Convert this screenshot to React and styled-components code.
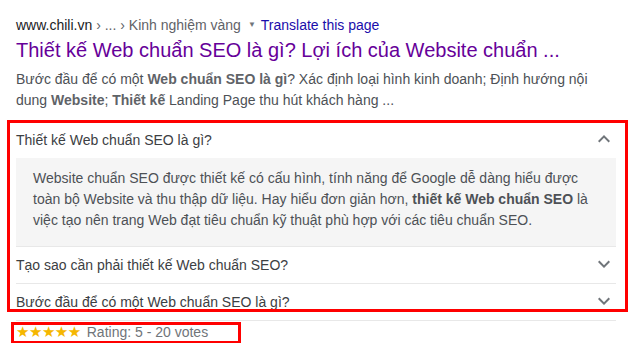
import styled, { createGlobalStyle } from "styled-components";

const GlobalStyle = createGlobalStyle`
  body {
    margin: 0;
    background: #fff;
    font-family: "Liberation Sans", Arial, sans-serif;
  }
`;

const faqs = [
  {
    q: "Thiết kế Web chuẩn SEO là gì?",
    open: true,
  },
  { q: "Tạo sao cần phải thiết kế Web chuẩn SEO?" },
  { q: "Bước đầu để có một Web chuẩn SEO là gì?" },
];

function Chevron({ up }) {
  return (
    <Icon viewBox="0 0 24 24" aria-hidden="true">
      {up ? (
        <path d="M12 8l-6 6 1.41 1.41L12 10.83l4.59 4.58L18 14z" />
      ) : (
        <path d="M16.59 8.59L12 13.17 7.41 8.59 6 10l6 6 6-6z" />
      )}
    </Icon>
  );
}

function App() {
  return (
    <Page>
      <GlobalStyle />
      <Result>
        <Cite>
          <Domain>www.chili.vn</Domain>
          <Crumbs> › ... › Kinh nghiệm vàng</Crumbs>
          <DropArrow>▼</DropArrow>
          <Translate>Translate this page</Translate>
        </Cite>
        <Title>Thiết kế Web chuẩn SEO là gì? Lợi ích của Website chuẩn ...</Title>
        <Snippet>
          Bước đầu để có một <b>Web chuẩn SEO là gì</b>? Xác định loại hình
          kinh doanh; Định hướng nội dung <b>Website</b>; <b>Thiết kế</b>{" "}
          Landing Page thu hút khách hàng ...
        </Snippet>
      </Result>

      <Faq>
        {faqs.map((item) => (
          <FaqItem key={item.q}>
            <FaqHeader>
              <span>{item.q}</span>
              <Chevron up={item.open} />
            </FaqHeader>
            {item.open && (
              <FaqBody>
                Website chuẩn SEO được thiết kế có cấu hình, tính năng để Google
                dễ dàng hiểu được toàn bộ Website và thu thập dữ liệu. Hay hiểu
                đơn giản hơn, <b>thiết kế Web chuẩn SEO</b> là việc tạo nên
                trang Web đạt tiêu chuẩn kỹ thuật phù hợp với các tiêu chuẩn
                SEO.
              </FaqBody>
            )}
          </FaqItem>
        ))}
        <Highlight $top={-2} $right={-12} $bottom={9} $left={-9} />
      </Faq>

      <Rating>
        <Stars>★★★★★</Stars>
        <span>Rating: 5 - 20 votes</span>
        <Highlight $top={1} $right={-33} $bottom={-1} $left={-5} />
      </Rating>
    </Page>
  );
}

export default App;

const Page = styled.div`
  width: 600px;
  padding: 15px 0 0 16px;
`;

const Result = styled.div`
  display: flex;
  flex-direction: column;
`;

const Cite = styled.div`
  display: flex;
  align-items: center;
  font-size: 14px;
  line-height: 18px;
  white-space: nowrap;
`;

const Domain = styled.span`
  color: #202124;
`;

const Crumbs = styled.span`
  color: #5f6368;
  white-space: pre;
`;

const DropArrow = styled.span`
  color: #70757a;
  font-size: 8px;
  margin: 1px 5px 0 7px;
`;

const Translate = styled.span`
  color: #1a0dab;
`;

const Title = styled.h3`
  margin: 3px 0 0;
  font-size: 20px;
  font-weight: normal;
  line-height: 26px;
  color: #660099;
  white-space: nowrap;
`;

const Snippet = styled.div`
  margin-top: 6px;
  font-size: 14px;
  line-height: 21px;
  color: #4d5156;

  b {
    color: #5f6368;
  }
`;

const Faq = styled.div`
  position: relative;
  margin-top: 11px;
`;

const FaqItem = styled.div`
  border-bottom: 1px solid #e8e8e8;
`;

const FaqHeader = styled.div`
  height: 36px;
  display: flex;
  align-items: center;
  justify-content: space-between;
  font-size: 14px;
  color: #3c4043;
`;

const Icon = styled.svg`
  width: 24px;
  height: 24px;
  fill: #70757a;
  margin-top: -2px;
`;

const FaqBody = styled.div`
  background: #f5f5f5;
  padding: 10px 16px 15px 17px;
  font-size: 14px;
  line-height: 21px;
  color: #4d5156;
`;

const Highlight = styled.div`
  position: absolute;
  top: ${(p) => p.$top}px;
  right: ${(p) => p.$right}px;
  bottom: ${(p) => p.$bottom}px;
  left: ${(p) => p.$left}px;
  border: 3px solid #ff0000;
  pointer-events: none;
`;

const Rating = styled.div`
  position: relative;
  display: inline-flex;
  align-items: center;
  gap: 6px;
  height: 22px;
  font-size: 14px;
  color: #70757a;
`;

const Stars = styled.span`
  font-family: "DejaVu Sans", sans-serif;
  font-size: 15px;
  color: #f5b700;
  letter-spacing: -0.5px;
`;
